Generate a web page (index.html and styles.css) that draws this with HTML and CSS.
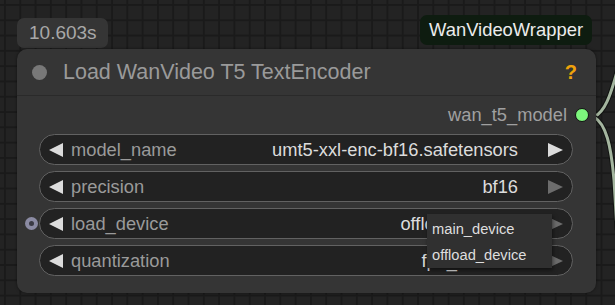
FILE: index.html
```html
<!DOCTYPE html>
<html>
<head>
<meta charset="utf-8">
<link rel="stylesheet" href="styles.css">
</head>
<body>
<div class="canvas">
  <svg class="wires" width="615" height="305" viewBox="0 0 615 305">
    <path class="wire-edge" d="M594 117 C604 112 610 100 620 60"/>
    <path class="wire-core" d="M594 117 C604 112 610 100 620 60"/>
    <path class="wire-edge" d="M594 117 C606 124 611 145 614 180 L617 230"/>
    <path class="wire-core" d="M594 117 C606 124 611 145 614 180 L617 230"/>
  </svg>

  <div class="badge-time">10.603s</div>
  <div class="badge-pack">WanVideoWrapper</div>

  <div class="node">
    <div class="node-title">
      <span class="title-dot"></span>
      <span class="title-text">Load WanVideo T5 TextEncoder</span>
      <span class="title-help">?</span>
    </div>
    <div class="node-body">
      <div class="output-row">
        <span class="output-name">wan_t5_model</span>
        <span class="output-dot"></span>
      </div>
      <div class="widgets">
        <div class="widget">
          <svg class="arrow" width="14" height="14" viewBox="0 0 14 14"><polygon points="14,0 14,14 0,7"/></svg>
          <span class="w-label">model_name</span>
          <span class="w-value">umt5-xxl-enc-bf16.safetensors</span>
          <svg class="arrow" width="15" height="14" viewBox="0 0 15 14"><polygon points="0,0 0,14 15,7"/></svg>
        </div>
        <div class="widget">
          <svg class="arrow" width="14" height="14" viewBox="0 0 14 14"><polygon points="14,0 14,14 0,7"/></svg>
          <span class="w-label">precision</span>
          <span class="w-value">bf16</span>
          <svg class="arrow dim" width="15" height="14" viewBox="0 0 15 14"><polygon points="0,0 0,14 15,7"/></svg>
        </div>
        <div class="widget">
          <span class="input-slot"></span>
          <svg class="arrow" width="14" height="14" viewBox="0 0 14 14"><polygon points="14,0 14,14 0,7"/></svg>
          <span class="w-label">load_device</span>
          <span class="w-value">offload_device</span>
          <svg class="arrow dim" width="15" height="14" viewBox="0 0 15 14"><polygon points="0,0 0,14 15,7"/></svg>
        </div>
        <div class="widget">
          <svg class="arrow" width="14" height="14" viewBox="0 0 14 14"><polygon points="14,0 14,14 0,7"/></svg>
          <span class="w-label">quantization</span>
          <span class="w-value">fp8_e4m3fn</span>
          <svg class="arrow dim" width="15" height="14" viewBox="0 0 15 14"><polygon points="0,0 0,14 15,7"/></svg>
        </div>
      </div>
    </div>
  </div>

  <div class="menu">
    <div class="menu-item">main_device</div>
    <div class="menu-item">offload_device</div>
  </div>
</div>
</body>
</html>
```

FILE: styles.css
```css
* { box-sizing: border-box; }
html, body { margin: 0; padding: 0; }
body { background: #222; font-family: "Liberation Sans", Arial, sans-serif; }

.canvas {
  position: relative;
  width: 615px;
  height: 305px;
  overflow: hidden;
  background-color: #232323;
  background-image:
    linear-gradient(#1a1a1a 2px, transparent 2px),
    linear-gradient(90deg, #1a1a1a 2px, transparent 2px);
  background-size: 15.3px 15.3px;
  background-position: 4px 4px;
}

.wires { position: absolute; left: 0; top: 0; }
.wire-edge { fill: none; stroke: #121412; stroke-width: 5; }
.wire-core { fill: none; stroke: #a4b59f; stroke-width: 3; }

.badge-time {
  position: absolute;
  left: 17px;
  top: 18px;
  width: 91px;
  height: 30px;
  border-radius: 7px;
  background: #353535;
  color: #a8a8a8;
  font-size: 19px;
  display: flex;
  align-items: center;
  padding-left: 12px;
}

.badge-pack {
  position: absolute;
  left: 420px;
  top: 15px;
  width: 172px;
  height: 30px;
  border-radius: 7px;
  background: #0e1c10;
  color: #ececec;
  font-size: 18.4px;
  display: flex;
  align-items: center;
  padding-left: 9px;
}

.node {
  position: absolute;
  left: 17px;
  top: 49px;
  width: 579px;
  height: 244px;
  background: #353535;
  border-radius: 10px;
  box-shadow: 0 0 3px rgba(0,0,0,0.5);
  display: flex;
  flex-direction: column;
}

.node-title {
  height: 47px;
  display: flex;
  align-items: center;
  padding: 0 19px 0 15px;
  border-bottom: 1px solid #2a2a2a;
}
.title-dot {
  width: 15px;
  height: 15px;
  border-radius: 50%;
  background: #787878;
  margin-right: 16px;
  flex: none;
}
.title-text {
  flex: 1;
  color: #9a9a9a;
  font-size: 21.5px;
  white-space: nowrap;
}
.title-help {
  color: #f0a30a;
  font-size: 20px;
  font-weight: bold;
}

.node-body { flex: 1; display: flex; flex-direction: column; }

.output-row {
  height: 38px;
  display: flex;
  justify-content: flex-end;
  align-items: center;
  padding-right: 7px;
  gap: 8px;
}
.output-name { color: #a0a0a0; font-size: 18.3px; }
.output-dot {
  width: 14px;
  height: 14px;
  border-radius: 50%;
  background: #7df77d;
  border: 1.5px solid #111;
}

.widgets {
  display: flex;
  flex-direction: column;
  gap: 6px;
  padding: 0 23px 0 22px;
}
.widget {
  position: relative;
  height: 31px;
  border: 1px solid #626262;
  border-radius: 16px;
  background: #222;
  display: flex;
  align-items: center;
  padding: 0 9px 0 9px;
  font-size: 18.3px;
  white-space: nowrap;
}
.arrow { flex: none; fill: #dcdcdc; }
.arrow.dim { fill: #6c6c6c; }
.w-label { color: #9a9a9a; margin-left: 8px; }
.w-value { flex: 1; text-align: right; color: #dcdcdc; margin-right: 30px; }

.input-slot {
  position: absolute;
  left: -15px;
  top: 8px;
  width: 13px;
  height: 13px;
  border-radius: 50%;
  background: #8b8ba3;
  display: flex;
  align-items: center;
  justify-content: center;
}
.input-slot::after {
  content: "";
  width: 5px;
  height: 5px;
  border-radius: 50%;
  background: #3a3a44;
}

.menu {
  position: absolute;
  left: 427px;
  top: 214px;
  width: 125px;
  height: 54px;
  background: #303030;
  box-shadow: 1px 2px 4px rgba(0,0,0,0.5);
  padding-top: 2px;
  display: flex;
  flex-direction: column;
}
.menu-item {
  height: 26px;
  display: flex;
  align-items: center;
  padding-left: 5px;
  color: #dedede;
  font-size: 14.7px;
}
```
